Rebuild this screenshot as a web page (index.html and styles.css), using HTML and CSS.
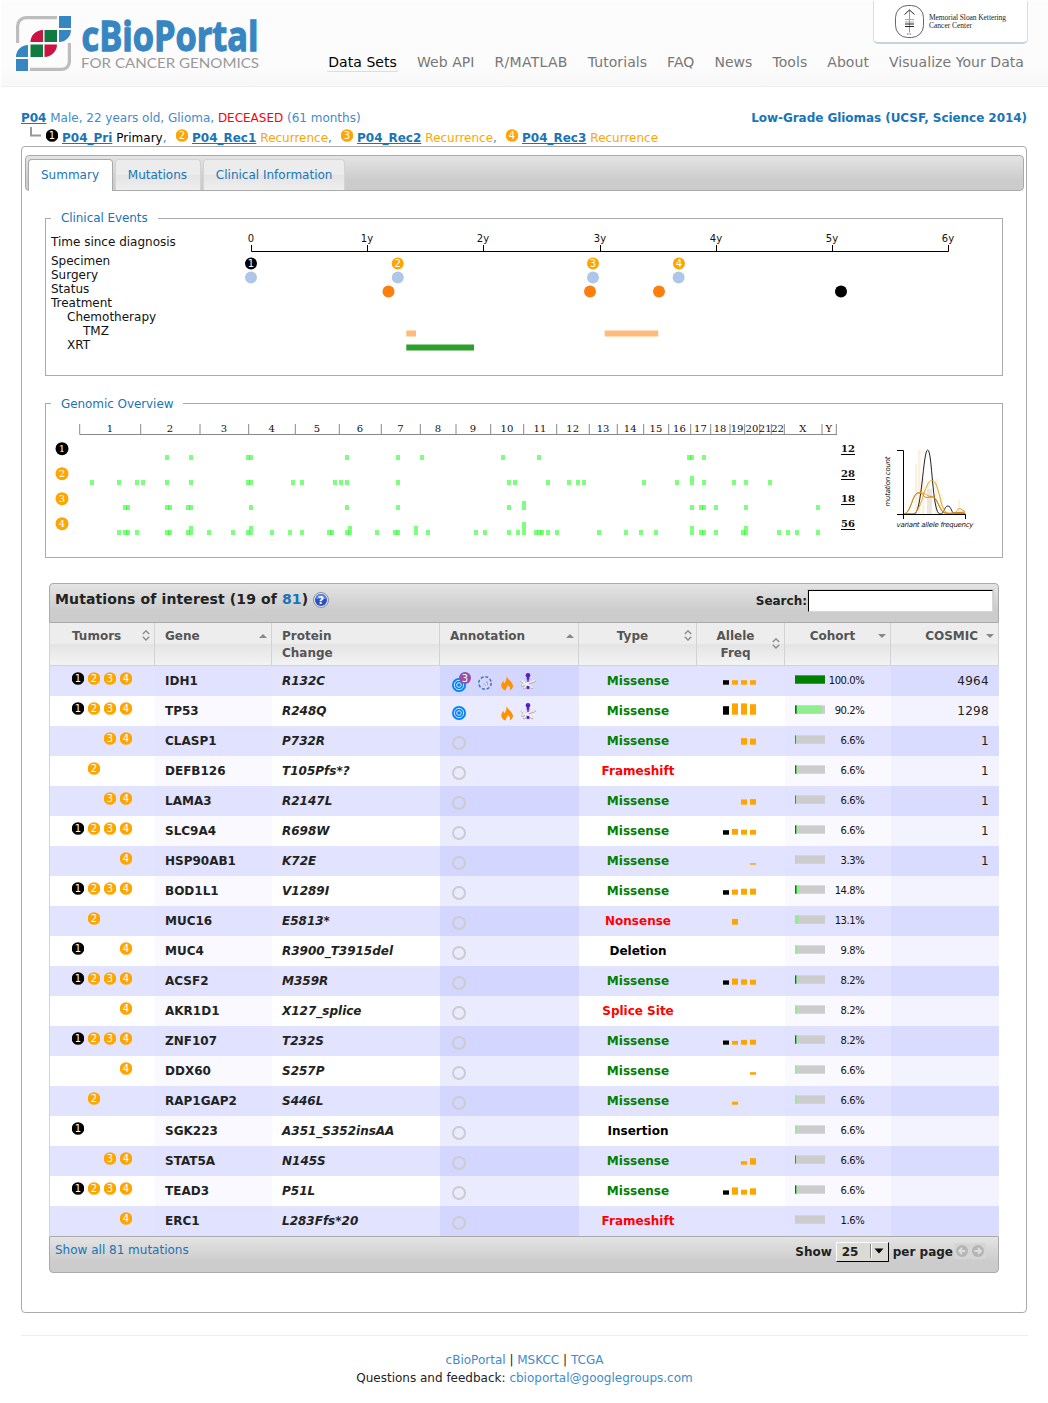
FILE: index.html
```html
<!DOCTYPE html>
<html lang="en">
<head>
<meta charset="utf-8">
<title>cBioPortal for Cancer Genomics: Patient P04</title>
<link rel="stylesheet" href="styles.css">
</head>
<body>
<header class="site-header">
  <svg class="logo" width="250" height="72" viewBox="12 2 250 72">
    <g fill="none" stroke="#bdbdbd" stroke-width="3.2">
      <path d="M17.6 43V26a8.4 8.4 0 0 1 8.4-8.400H57"/>
      <path d="M30 69.400H62a7.400 7.400 0 0 0 7.400-7.400V43"/>
    </g>
    <g fill="#3786c2">
      <path d="M59 16h12v12H59zM59 30h12a12 12 0 0 1-12 12zM16 59h12v12H16zM28 45v12H16a12 12 0 0 1 12-12z"/>
    </g>
    <path fill="#cb1442" d="M43 30v12H30.500a12.500 12 0 0 1 12.500-12zM44.500 44.500H57a12.500 12.500 0 0 1-12.500 12.500z"/>
    <path fill="#107a41" d="M44.500 30H57v12H44.500zM30.500 44.500H43V57H30.500z"/>
    <text class="logo-name" x="81.500" y="50.500" textLength="177" lengthAdjust="spacingAndGlyphs">cBioPortal</text>
    <text class="logo-tag" x="81" y="68" textLength="178" lengthAdjust="spacingAndGlyphs">FOR CANCER GENOMICS</text>
  </svg>
  <div class="header-right">
    <div class="sponsor">
      <svg width="153" height="43" viewBox="874 0 153 43">
        <rect x="895.500" y="5.500" width="28" height="32" rx="12" fill="none" stroke="#666"/>
        <path d="M909.500 9.500v23" stroke="#999" fill="none"/>
        <path d="M904.500 14.500l5-4.500 5 4.500" stroke="#222" fill="none"/>
        <path d="M905 19.500h9M905 22h9" stroke="#aaa" fill="none"/>
        <path d="M905 24h9M905 26.500h9" stroke="#222" fill="none"/>
        <path d="M907 34h5" stroke="#666" stroke-dasharray="1.500 1" fill="none"/>
        <text x="929" y="20" textLength="77">Memorial Sloan Kettering</text>
        <text x="929" y="28" textLength="43">Cancer Center</text>
      </svg>
    </div>
    <nav class="main-nav">
      <a class="current">Data Sets</a><a>Web API</a><a class="wide">R/MATLAB</a><a>Tutorials</a><a>FAQ</a><a>News</a><a>Tools</a><a>About</a><a>Visualize Your Data</a>
    </nav>
  </div>
</header>

<main>
  <div class="patient-line">
    <span><a class="id">P04</a> Male, 22 years old, Glioma, <span class="deceased">DECEASED</span> (61 months)</span>
    <a class="study">Low-Grade Gliomas (UCSF, Science 2014)</a>
  </div>
  <div class="sample-line" id="samples">
    <svg class="branch" width="12" height="12"><path d="M1 1v8.500h10" fill="none" stroke="#999" stroke-width="2"/></svg>
  </div>

  <div class="panel">
    <div class="tabs">
      <a class="tab active">Summary</a><a class="tab">Mutations</a><a class="tab last">Clinical Information</a>
    </div>

    <fieldset class="events">
      <legend>Clinical Events</legend>
      <svg id="timeline" width="956" height="148" viewBox="46 227 956 148">
        <g class="labels">
          <text x="51" y="246">Time since diagnosis</text>
          <text x="51" y="265">Specimen</text>
          <text x="51" y="279">Surgery</text>
          <text x="51" y="293">Status</text>
          <text x="51" y="307">Treatment</text>
          <text x="67" y="321">Chemotherapy</text>
          <text x="83" y="335">TMZ</text>
          <text x="67" y="349">XRT</text>
        </g>
      </svg>
    </fieldset>

    <fieldset class="genomic">
      <legend>Genomic Overview</legend>
      <svg id="genome" width="956" height="145" viewBox="46 412 956 145">
        <g class="vaf">
          <g fill="#e8b050" opacity=".17">
            <path d="M915 464h2.500v50H915zM918 450h2.500v64H918zM922 478h2.500v36H922zM927 482h2.500v32H927zM935 479h2.500v35H935zM940 494h2.500v20H940zM958 500h2v14h-2z"/>
            <path fill="#963" d="M927 489h5v25h-5z"/>
          </g>
          <g fill="none">
            <path stroke="#222" d="M904 514h10C922 514 923 450 927.700 450S932 514 940 514C945 514 944 506 947.800 506S951 514 956 514h9.500"/>
            <path stroke="#e69f1a" d="M904 514h8C922 514 924 480.500 932 480.500S939 513 949 513.500S956 508.500 960 508.500L965 511.500"/>
            <path stroke="#e69f1a" d="M904 514C912 512 912 491.500 920 492.500S925 496 932 496.500S938 513 947 513.500S956 512 965 512"/>
            <path stroke="#c97f14" d="M904 514C912 512 912 492 919 493S922 499 930 497S939 512 945 513S956 511.500 965 513"/>
            <path stroke="#000" d="M897 450.500h6.500V519M897 514.500h68.500V519"/>
          </g>
          <text x="896.500" y="527" textLength="77">variant allele frequency</text>
          <text transform="translate(890 506.500) rotate(-90)" textLength="50">mutation count</text>
        </g>
      </svg>
    </fieldset>

    <section class="mutations">
      <div class="bar table-title">
        <h2><span>Mutations of interest (19 of <a>81</a>)</span><svg class="help" width="16" height="16" viewBox="0 0 16 16"><circle cx="8" cy="8" r="7.500" fill="#dfe3ee" stroke="#8a90a4"/><circle cx="8" cy="8" r="6" fill="#2850c0"/><path d="M2.500 7a5.500 5 0 0 1 11 0z" fill="#5f83e0"/><text x="8" y="12" text-anchor="middle">?</text></svg></h2>
        <label class="search">Search:<input type="text"></label>
      </div>
      <table>
        <colgroup><col class="c-tumors"><col class="c-gene"><col class="c-protein"><col class="c-annot"><col class="c-type"><col class="c-allele"><col class="c-cohort"><col class="c-cosmic"></colgroup>
        <thead>
          <tr>
            <th class="tumors"><div><span>Tumors</span><i class="both"></i></div></th>
            <th><div><span>Gene</span><i class="asc"></i></div></th>
            <th><div><span>Protein<br>Change</span></div></th>
            <th><div><span>Annotation</span><i class="asc"></i></div></th>
            <th class="mid"><div><span>Type</span><i class="both"></i></div></th>
            <th class="mid"><div><span>Allele<br>Freq</span><i class="both tall"></i></div></th>
            <th class="mid"><div><span>Cohort</span><i class="desc"></i></div></th>
            <th class="num"><div><span>COSMIC</span><i class="desc"></i></div></th>
          </tr>
        </thead>
        <tbody id="rows"></tbody>
      </table>
      <div class="bar table-foot">
        <a>Show all 81 mutations</a>
        <div class="pager"><span>Show</span>
          <span class="select"><b>25</b><svg width="18" height="16"><path d="M.500 1v14" stroke="#888"/><path d="M1.500 1v14" stroke="#fff"/><path d="M4.500 5.500h9L9 10.500z"/></svg></span>
          <span>per page</span>
          <svg class="arrows" width="32" height="16"><rect width="16" height="16" rx="2" fill="#d5d5d5"/><rect x="16" width="16" height="16" rx="2" fill="#d5d5d5"/><g fill="#b5b5b5"><circle cx="8" cy="8" r="6"/><circle cx="24" cy="8" r="6"/></g><path d="M11.500 8H5M8 5L5 8l3 3M20.500 8H27M24 5l3 3-3 3" fill="none" stroke="#ddd" stroke-width="1.800"/></svg>
        </div>
      </div>
    </section>
  </div>
</main>

<footer class="site-footer">
  <div><a>cBioPortal</a> | <a>MSKCC</a> | <a>TCGA</a></div>
  <div>Questions and feedback: <a>cbioportal@googlegroups.com</a></div>
</footer>
<script src="app.js"></script>
</body>
</html>
```
FILE: styles.css
```css
* { box-sizing: border-box; }
body {
  margin: 0;
  background: #fff;
  color: #222;
  font: 12px/18px "DejaVu Sans", sans-serif;
}
a { color: #1974b8; text-decoration: none; }
svg { display: block; }

.site-header {
  display: flex;
  justify-content: space-between;
  height: 86px;
  margin: 1px 0 0 1px;
  padding: 0 20px 0 11px;
  background: linear-gradient(#fcfcfc 75%, #f8f8f8);
  border-bottom: 1px solid #efefef;
}
.logo { margin-top: 1px; }
.logo-name { font: bold 42px "Open Sans", sans-serif; fill: #3786c2; stroke: #3786c2; stroke-width: 1.3; }
.logo-tag { font: 14px Lato, sans-serif; fill: #999; }
.header-right { display: flex; flex-direction: column; align-items: flex-end; }
.sponsor {
  width: 155px;
  height: 43px;
  background: #fff;
  border: 1px solid #d3dfe6;
  border-top: 0;
  border-bottom: 2px solid #c6d5dd;
  border-radius: 0 0 5px 5px;
}
.sponsor svg { margin-top: -1px; }
.sponsor text { font: 7.5px "Liberation Serif", serif; fill: #222; }
.main-nav { display: flex; gap: 18px; margin: 10px 3px 0 0; font-size: 14px; line-height: 17px; letter-spacing: .06px; }
.main-nav a { padding: 0 1px; color: #777; border-bottom: 1px solid transparent; }
.main-nav .wide { letter-spacing: .3px; }
.main-nav .current { color: #000; border-color: #ddd; }

main { padding: 0 21px; }
.patient-line { display: flex; justify-content: space-between; padding-top: 22px; color: #428bca; }
.patient-line .id, .sample-line a { font-weight: bold; text-decoration: underline; color: #1974b8; }
.patient-line > span { letter-spacing: -.01px; }
.deceased { color: red; }
.study { font-weight: bold; letter-spacing: -.05px; }
.sample-line { display: flex; height: 19px; padding: 2px 0 0 9px; line-height: 18px; color: #428bca; }
.branch { margin: -3px 4px 0 0; }
.badge { display: inline-block; flex: none; overflow: hidden; }
.badge text { font: 10px "DejaVu Sans", sans-serif; fill: #fff; text-anchor: middle; }
.sample-line .badge { margin-right: 4px; }
.sample { display: flex; width: 165px; }
.sample:nth-child(2) { width: 130px; }
.sample a { margin-right: 4px; }
.primary { color: #000; }
.recurrence { color: orange; }

.panel { height: 1167px; padding: 8px 2px 0 3px; border: 1px solid #aaa; border-radius: 4px; }
.tabs {
  display: flex;
  align-items: flex-end;
  gap: 2px;
  height: 36px;
  padding-left: 2px;
  background: linear-gradient(#e4e4e4, #ccc 70%);
  border: 1px solid #aaa;
  border-radius: 4px;
}
.tab {
  height: 31px;
  padding: 6px 12.8px 0 12px;
  color: #1974b8;
  background: linear-gradient(#ececec 50%, #e4e4e4 50%, #eee);
  border: 1px solid #d3d3d3;
  border-bottom: 0;
  border-radius: 4px 4px 0 0;
}
.tab.last { padding-right: 12px; }
.tab.active { height: 32px; margin-bottom: -1px; background: #fff; border-color: #aaa; }
fieldset { margin: 0 21px 0 20px; padding: 0; border: 1px solid #aaa; min-width: 0; }
legend { height: 17px; line-height: 16px; margin-left: 5px; padding: 0 10px; color: #1974b8; letter-spacing: -.07px; }
.events { margin-top: 19px; }
.genomic { margin-top: 19px; }
.genomic legend { line-height: 18px; }
.labels text { font-size: 12px; fill: #111; }
.tick { font-size: 10px; text-anchor: middle; fill: #111; }
.chrom, .count, .mark { font: 10px "DejaVu Serif", serif; fill: #111; text-anchor: middle; }
.count { font-weight: bold; }
.mark { fill: #fff; }
.vaf text { font: italic 7px "DejaVu Sans", sans-serif; fill: #111; }

.mutations { width: 950px; margin: 25px 0 0 24px; }
.bar { display: flex; justify-content: space-between; background: linear-gradient(#e4e4e4, #ccc 70%); border: 1px solid #aaa; }
.table-title { height: 40px; padding: 5px 4px 5px 5px; border-radius: 4px 4px 0 0; }
.table-title h2 { display: flex; margin: 1px 0 0; font-size: 14px; line-height: 18px; letter-spacing: .12px; }
.help { margin: 2px 0 0 5px; }
.help text { font: bold 11px "DejaVu Sans", sans-serif; letter-spacing: 0; fill: #fff; }
.search { display: flex; font-weight: bold; line-height: 24px; }
.search input {
  width: 187px;
  height: 24px;
  background: #fff;
  border: 2px solid;
  border-color: #000 #d8d8d8 #d8d8d8 #000;
  outline: 1px solid #ccc;
  outline-offset: -1px;
}
table { width: 950px; table-layout: fixed; border-collapse: separate; border-spacing: 0; border-left: 1px solid #d3d3d3; }
.c-tumors { width: 105px; } .c-gene { width: 117px; } .c-protein { width: 168px; } .c-annot { width: 139px; }
.c-type { width: 118px; } .c-allele { width: 88px; } .c-cohort { width: 106px; } .c-cosmic { width: 108px; }
th {
  height: 43px;
  padding: 5px 4px 0 10px;
  vertical-align: top;
  text-align: left;
  line-height: 17px;
  color: #555;
  background: linear-gradient(#ededed 50%, #e4e4e4 50%, #f3f3f3);
  border-right: 1px solid #d3d3d3;
  border-bottom: 1px solid #d3d3d3;
}
th div { display: flex; }
th span { flex: 1; }
th.tumors, td.tumors { padding-left: 22px; }
th.mid { padding-left: 2px; text-align: center; }
th.num { text-align: right; }
th.num span { padding-right: 8px; }
th i { flex: none; width: 8px; height: 17px; }
th i svg { margin-top: 3px; }
th i.both svg { margin-top: 2px; }
th i.tall svg { margin-top: 10px; }
td { height: 30px; padding: 0; }
tbody tr:nth-child(odd) { background: #e2e4ff; }
tbody tr:nth-child(odd) .gene, tbody tr:nth-child(odd) .cohort { background: #e0e2ff; }
tbody tr:nth-child(odd) .annot { background: #d3d6ff; }
tbody tr:nth-child(odd) .cosmic { background: #dadcff; }
tbody tr:nth-child(even) .gene, tbody tr:nth-child(even) .cohort { background: #f9f9ff; }
tbody tr:nth-child(even) .annot { background: #eaebff; }
tbody tr:nth-child(even) .cosmic { background: #f2f3ff; }
.slots { display: flex; gap: 4px; height: 18px; }
.slots .badge, .slots .gap { width: 12px; }
.gene, .protein { padding-left: 10px; font-weight: bold; }
.protein { font-style: italic; }
.type { text-align: center; font-weight: bold; color: #000; }
.missense { color: green; }
.truncating { color: red; }
.cohort div { display: flex; justify-content: space-between; padding: 0 26.6px 0 10px; font-size: 10px; line-height: 30px; height: 30px; color: #111; letter-spacing: -.4px; }
.cosmic { padding-right: 10px; text-align: right; letter-spacing: .3px; }
.annot text { font: 10px "DejaVu Sans", sans-serif; fill: #fff; text-anchor: middle; }
.table-foot { height: 37px; padding: 4px 12px 0 5px; border-radius: 0 0 4px 4px; }
.pager { display: flex; gap: 4px; font-weight: bold; line-height: 22px; }
.select {
  display: flex;
  justify-content: space-between;
  width: 53px;
  height: 20px;
  margin-top: 1px;
  padding-left: 5px;
  line-height: 18px;
  background: #dcdad5;
  border: 1px solid;
  border-color: #fff #000 #000 #fff;
}
.arrows { margin: 2px 0 0 -3px; }

.site-footer { margin: 22px 20px 0 21px; padding-top: 15px; border-top: 1px solid #eee; text-align: center; }
.site-footer a { color: #428bca; }
```
FILE: app.js
```js
const ORANGE = 'orange';
const sampleColor = n => (n === 1 ? '#000' : ORANGE);
const badge = n =>
  `<svg class="badge" width="12" height="13"><circle cx="6" cy="6.500" r="6.300" fill="${sampleColor(n)}"/><text x="6" y="10.200">${n}</text></svg>`;

// Sample list
document.getElementById('samples').insertAdjacentHTML('beforeend',
  [['P04_Pri', 'Primary'], ['P04_Rec1', 'Recurrence'], ['P04_Rec2', 'Recurrence'], ['P04_Rec3', 'Recurrence']]
    .map(([id, kind], i) => `<span class="sample">${badge(i + 1)}<a>${id}</a> <span class="${kind.toLowerCase()}">${kind}</span>${i < 3 ? ',' : ''}</span>`)
    .join(''));

// Clinical timeline
const dot = (x, y, fill) => `<circle cx="${x}" cy="${y}" r="6" fill="${fill}"/>`;
let t = '<path d="M251.500 245v6.500H948.500V245" fill="none" stroke="#000"/>';
for (let i = 0; i <= 6; i++) {
  const x = Math.round(251 + i * 116.200) + 0.5;
  t += `<path d="M${x} 245v6" stroke="#000"/><text class="tick" x="${x - 0.5}" y="242">${i ? i + 'y' : 0}</text>`;
}
[251, 397.7, 593, 679].forEach((x, i) => {
  t += dot(x, 263.4, sampleColor(i + 1)) + `<text class="tick" style="fill:#fff" x="${x}" y="267">${i + 1}</text>`;
});
[251, 397.8, 593, 678.6].forEach(x => { t += dot(x, 277.4, '#aec7e8'); });
[388.5, 590, 659].forEach(x => { t += dot(x, 291.4, '#ff7f0e'); });
t += dot(841, 291.4, '#000');
t += '<path fill="#ffbb78" d="M406.300 330.400h9.700v6h-9.700zM604.700 330.400h53.500v6h-53.500z"/><path fill="#2ca02c" d="M406.300 344.400h67.700v6h-67.700z"/>';
document.getElementById('timeline').insertAdjacentHTML('beforeend', t);

// Genomic overview: [x] or [x, stacked mutations] per bin
const edges = [79.7, 140.7, 200, 248.7, 295.3, 339.3, 381.3, 420.3, 456, 490.7, 523.7, 556.7, 589.3, 617.3, 643.7, 668.7, 690.7, 710.7, 730, 744.7, 759.7, 771.3, 784.3, 822, 836.3];
let g = '<path d="M79.500 434.500H837" stroke="#888"/>';
edges.forEach((x, i) => {
  g += `<path d="M${x} 424v10" stroke="#888"/>`;
  if (i < 24) g += `<text class="chrom" x="${(x + edges[i + 1]) / 2 - 0.3}" y="432">${i === 22 ? 'X' : i === 23 ? 'Y' : i + 1}</text>`;
});
const bins = [
  [167, 191, 248, 251, 347, 398, 422, 503, 539, 689, 692, 704],
  [92, 119, 137, 143, 167, 191, 248, 251, 293, 302, 335, 341, 347, 398, 509, 515, 548, 569, 578, 584, 644, 677, [692, 2], 704, 734, 746, 770],
  [125, 128, 167, 170, 188, 191, 251, 347, 398, 509, [524, 2], 692, 701, 704, 716, 746, 818],
  [119, 125, 128, 137, 167, 170, 188, [191, 2], 209, 233, 248, [251, 2], 272, 290, 302, 329, 332, 347, [350, 2], 377, 395, 398, [416, 2], 428, 476, 485, 509, 518, [524, 3], 536, 539, 542, 548, 557, 599, 626, 641, 656, [692, 2], 701, 704, 716, 743, [746, 2], 779, 788, 797, 818],
];
[12, 28, 18, 56].forEach((count, i) => {
  const y = 449 + 25 * i;
  g += `<circle cx="62" cy="${y - 0.3}" r="6.500" fill="${sampleColor(i + 1)}"/><text class="mark" x="62" y="${y + 3}">${i + 1}</text>`;
  g += `<text class="count" x="848" y="${y + 3}">${count}</text><path d="M841 ${y + 5.500}h14" stroke="#000"/>`;
  bins[i].forEach(b => {
    const [x, n] = Array.isArray(b) ? b : [b, 1];
    const h = [0, 5, 9, 13][n];
    g += `<rect x="${x - 2}" y="${y + 11 - h}" width="4" height="${h}" fill="#0f0" fill-opacity=".5"/>`;
  });
});
document.getElementById('genome').insertAdjacentHTML('afterbegin', g);

// Sort indicators
const sortShapes = {
  both: '<svg width="8" height="11"><path d="M.800 4L4 .800 7.200 4M.800 6.800L4 10l3.200-3.200" fill="none" stroke="#888" stroke-width="1.300"/></svg>',
  asc: '<svg width="8" height="11"><path d="M0 7h8L4 3z" fill="#888"/></svg>',
  desc: '<svg width="8" height="11"><path d="M0 3h8L4 7z" fill="#888"/></svg>',
};
document.querySelectorAll('th i').forEach(el => { el.innerHTML = sortShapes[el.classList[0]]; });

// Mutation table: samples, gene, change, annotation level, type, allele bars, dark/light cohort bar, %, COSMIC
const data = [
  ['1234', 'IDH1', 'R132C', 2, 'Missense', [4.5, 4.5, 4.5, 4.5], 30, 30, '100.0', 4964],
  ['1234', 'TP53', 'R248Q', 1, 'Missense', [8.5, 11.3, 11.3, 10.5], 1.7, 27, '90.2', 1298],
  ['34', 'CLASP1', 'P732R', 0, 'Missense', [0, 0, 6.6, 6.1], 0.7, 1.3, '6.6', 1],
  ['2', 'DEFB126', 'T105Pfs*?', 0, 'Frameshift', [], 1.3, 2, '6.6', 1],
  ['34', 'LAMA3', 'R2147L', 0, 'Missense', [0, 0, 5.3, 5.6], 0.7, 1.3, '6.6', 1],
  ['1234', 'SLC9A4', 'R698W', 0, 'Missense', [4.5, 5.8, 5, 4.8], 1.3, 2, '6.6', 1],
  ['4', 'HSP90AB1', 'K72E', 0, 'Missense', [0, 0, 0, 1.5], 0, 0.8, '3.3', 1],
  ['1234', 'BOD1L1', 'V1289I', 0, 'Missense', [4.5, 5.2, 6, 6.1], 1.5, 4.3, '14.8', ''],
  ['2', 'MUC16', 'E5813*', 0, 'Nonsense', [0, 5.8], 0, 3.5, '13.1', ''],
  ['14', 'MUC4', 'R3900_T3915del', 0, 'Deletion', [], 0, 2.6, '9.8', ''],
  ['1234', 'ACSF2', 'M359R', 0, 'Missense', [4.3, 6.2, 5.3, 5], 1.3, 2, '8.2', ''],
  ['4', 'AKR1D1', 'X127_splice', 0, 'Splice Site', [], 0, 2.2, '8.2', ''],
  ['1234', 'ZNF107', 'T232S', 0, 'Missense', [4.2, 3.8, 4.8, 5], 1.3, 2, '8.2', ''],
  ['4', 'DDX60', 'S257P', 0, 'Missense', [0, 0, 0, 2.5], 0, 1.7, '6.6', ''],
  ['2', 'RAP1GAP2', 'S446L', 0, 'Missense', [0, 3], 0, 1.7, '6.6', ''],
  ['1', 'SGK223', 'A351_S352insAA', 0, 'Insertion', [], 0, 1.7, '6.6', ''],
  ['34', 'STAT5A', 'N145S', 0, 'Missense', [0, 0, 3.5, 6.5], 0.7, 1.3, '6.6', ''],
  ['1234', 'TEAD3', 'P51L', 0, 'Missense', [4.3, 7.3, 5, 6.4], 1.3, 1.8, '6.6', ''],
  ['4', 'ERC1', 'L283Ffs*20', 0, 'Frameshift', [], 0, 0.3, '1.6', ''],
];
const typeClass = { Missense: 'missense', Frameshift: 'truncating', Nonsense: 'truncating', 'Splice Site': 'truncating' };
const tools = `
  <path fill="#ff9200" d="M66.500 10c1 3.300 6.500 6 6.500 10 0 2-1.600 4-3.500 4.500 1.200-2.500 0-4.500-1.900-5.500.200 2-2.200 3-1.600 5.500-2.800-.500-4.800-2.300-4.800-5 0-2 1.200-3.200 2-4.800l1 2.500c1.700-2 2.500-4.200 2.300-7.200z"/>
  <g fill="none" stroke-linecap="round">
    <path d="M82 15l3 3M84.500 22l2.500-3M88 19l4 3M82.500 19.500l12-4.500" stroke="#aaa" stroke-width="2.600"/>
    <path d="M82 14.500l3 3M84.500 21.500l2.500-3M88 18.500l4 3M82.500 19l12-4.500" stroke="#f2f2f2" stroke-width="1.800"/>
  </g>
  <path d="M88 9v5.500M88 20v3" stroke="#5a1fc0" stroke-width="2.600"/><path d="M88 13.500v2.500" stroke="#8a5be0" stroke-width="2"/>
  <circle cx="88" cy="9.300" r="2.300" fill="#5a1fc0"/>`;
function annotation(level) {
  if (!level) return '<circle cx="19" cy="17" r="6" fill="none" stroke="#ccc" stroke-width="2"/>';
  const cy = level === 2 ? 19 : 17;
  let s = `<circle cx="19" cy="${cy}" r="7" fill="#007fff"/><g fill="none" stroke="#e4f1ff"><circle cx="19" cy="${cy}" r="4.700"/><circle cx="19" cy="${cy}" r="2.300"/></g>`;
  if (level === 2) {
    s += '<circle cx="25" cy="12" r="6" fill="#984ea3"/><text x="25" y="15.800">3</text>' +
      '<circle cx="45" cy="17" r="6.200" fill="none" stroke="#4777b8" stroke-width="1.500" stroke-dasharray="3 1.800"/>' +
      '<path d="M43 18h1.500M45.500 16h2v3M45 19.500h1" stroke="#9ab" fill="none"/>';
  }
  return s + tools;
}
document.getElementById('rows').innerHTML = data.map(([samples, gene, change, level, type, freq, dark, light, pct, cosmic]) => `
<tr>
  <td class="tumors"><div class="slots">${[1, 2, 3, 4].map(n => samples.includes(n) ? badge(n) : '<span class="gap"></span>').join('')}</div></td>
  <td class="gene">${gene}</td>
  <td class="protein">${change}</td>
  <td class="annot"><svg width="139" height="30">${annotation(level)}</svg></td>
  <td class="type ${typeClass[type] || ''}">${type}</td>
  <td><svg width="88" height="30">${freq.map((h, i) => `<rect x="${26 + 9 * i}" y="${18.700 - h}" width="6" height="${h}" fill="${sampleColor(i + 1)}"/>`).join('')}</svg></td>
  <td class="cohort"><div><svg width="30" height="30"><rect y="9.400" width="30" height="8.300" fill="#ccc"/><rect y="9.400" width="${light}" height="8.300" fill="#90ee90"/><rect y="9.400" width="${dark}" height="8.300" fill="green"/></svg>${pct}%</div></td>
  <td class="cosmic">${cosmic}</td>
</tr>`).join('');
```
